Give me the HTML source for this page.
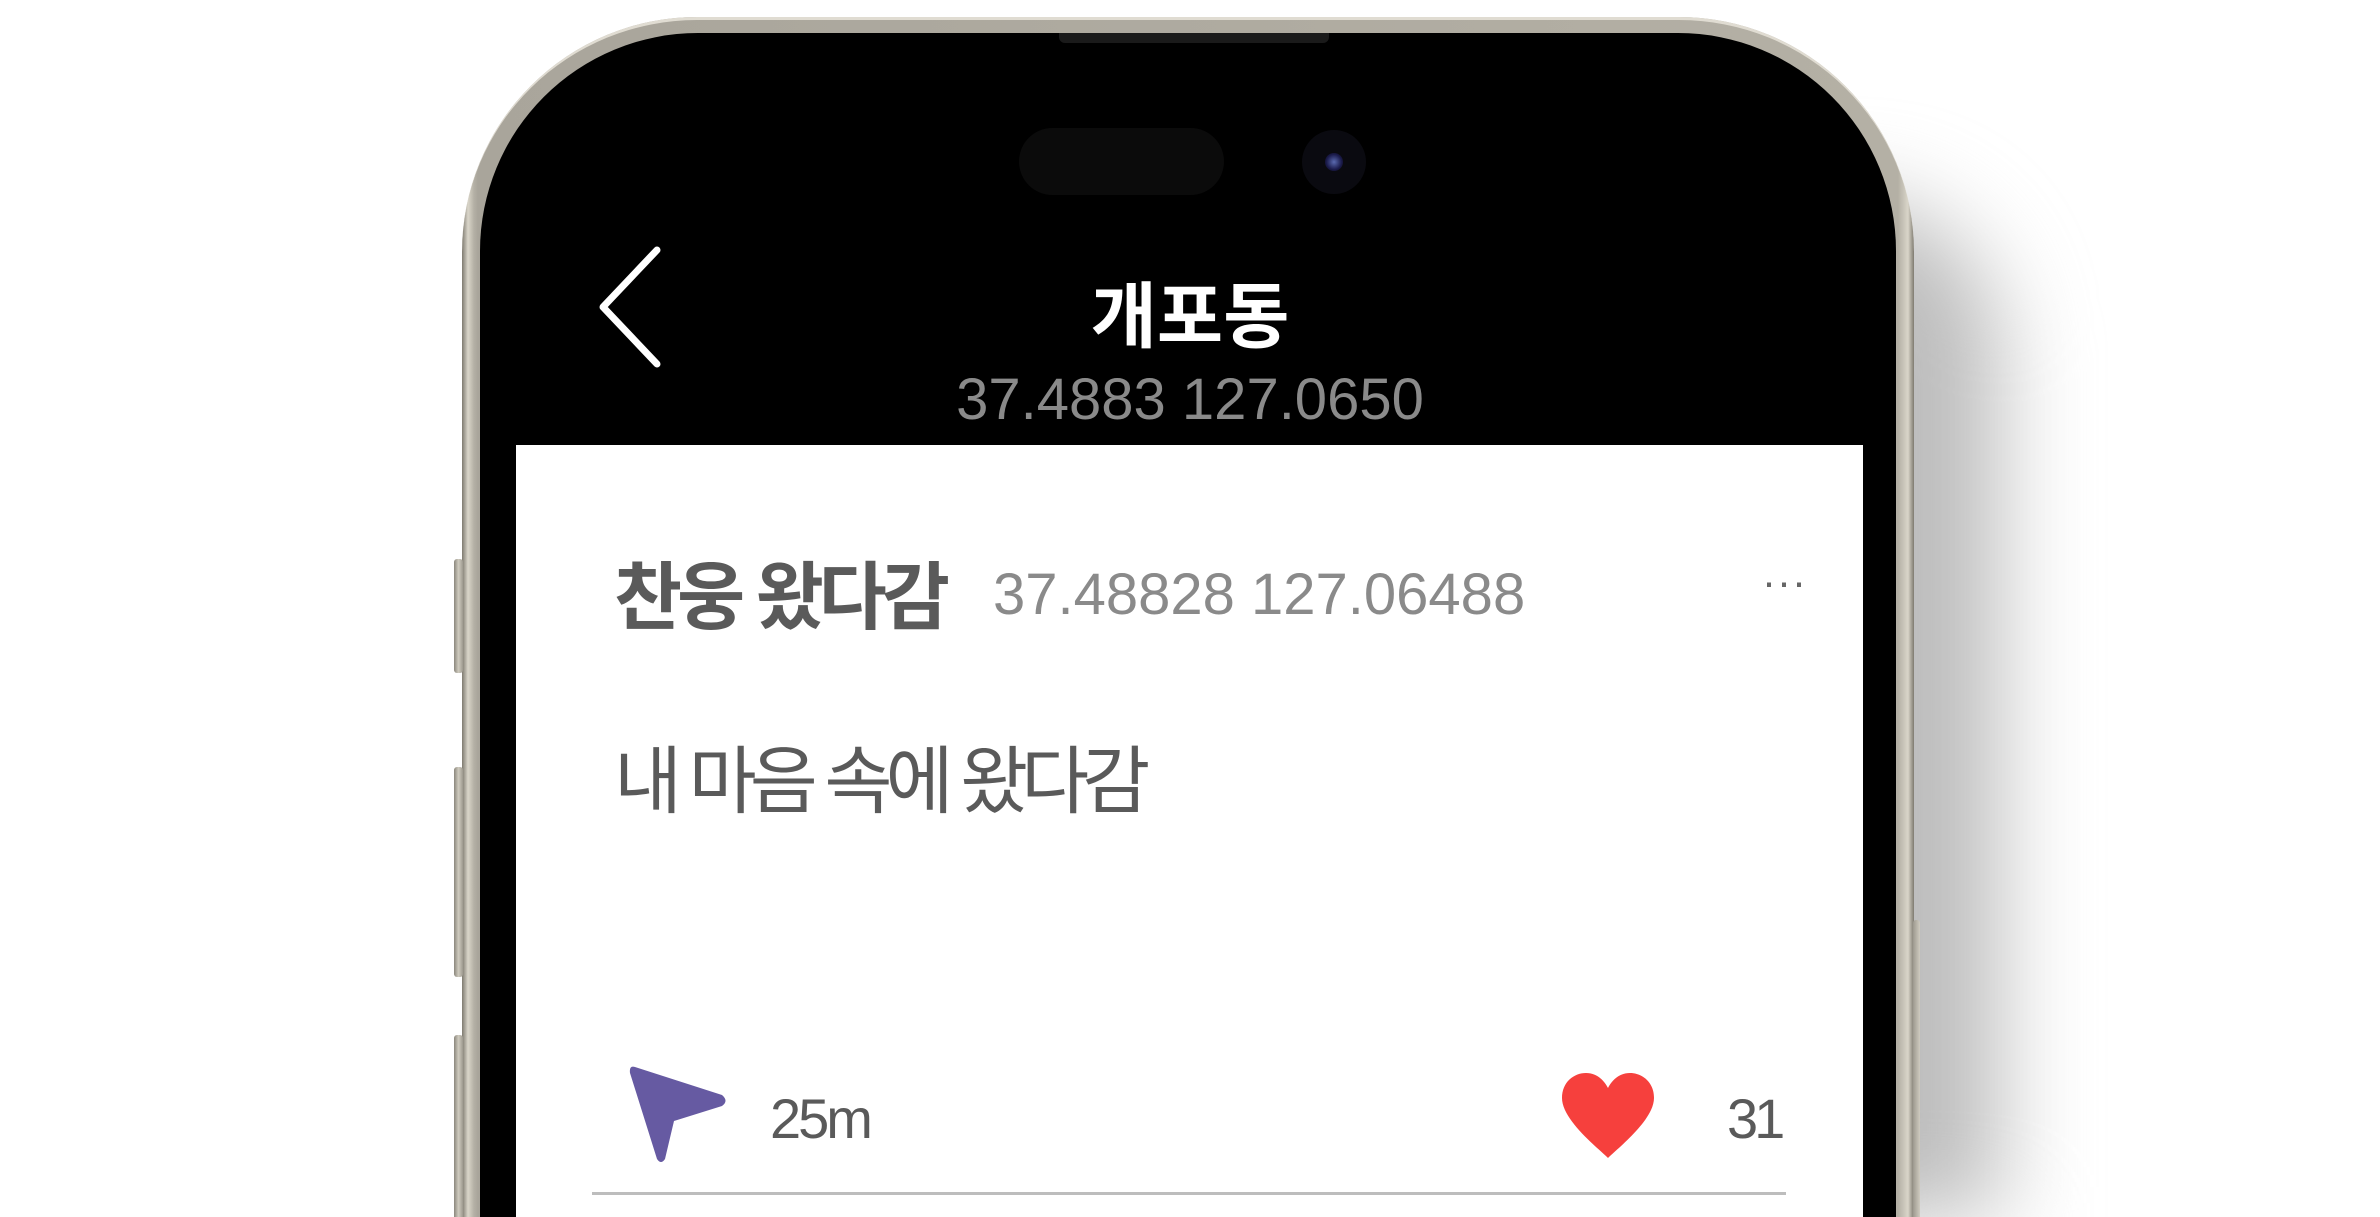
<!DOCTYPE html>
<html><head><meta charset="utf-8"><style>
*{margin:0;padding:0;box-sizing:border-box}
html,body{width:2380px;height:1217px;overflow:hidden;background:#fff}
body{font-family:"Liberation Sans","Noto Sans CJK KR",sans-serif}
#w{position:relative;width:2380px;height:1217px;overflow:hidden}
.shadow{position:absolute;left:1700px;top:200px;width:300px;height:1017px;border-radius:150px 150px 0 0;background:#bdbdbd;filter:blur(45px)}
.frame{position:absolute;left:462px;top:17px;width:1452px;height:1200px;border-radius:235px 235px 0 0;background:linear-gradient(90deg,#7e7a70 0,#d9d5c9 6px,#b4b0a5 12px,#a9a59b 16px,#b4b0a5 1436px,#d9d5c9 1446px,#7e7a70 1452px);}
.frame2{position:absolute;left:462px;top:17px;width:1452px;height:1200px;border-radius:235px 235px 0 0;border-top:3px solid #e0dcd2;}
.screen{position:absolute;left:480px;top:33px;width:1416px;height:1184px;border-radius:218px 218px 0 0;background:#000}
.btn{position:absolute;left:454px;width:9px;background:linear-gradient(90deg,#8a867c,#cfcbbf,#9d998f);border-radius:3px}
.rbtn{position:absolute;left:1913px;width:7px;top:920px;height:297px;background:linear-gradient(90deg,#9d998f,#cfcbbf);border-radius:3px 3px 0 0}
.card{position:absolute;left:516px;top:445px;width:1347px;height:772px;background:#fff}
.t{position:absolute;white-space:nowrap}
</style></head><body><div id="w">
<div class="shadow"></div>
<div class="frame"></div>
<div class="frame2"></div>
<div class="btn" style="top:559px;height:114px"></div>
<div class="btn" style="top:767px;height:210px"></div>
<div class="btn" style="top:1035px;height:182px;border-radius:3px 3px 0 0"></div>
<div class="rbtn"></div>
<div class="screen"></div>
<div style="position:absolute;left:1059px;top:33px;width:270px;height:10px;background:#1a1a1a;border-radius:0 0 6px 6px"></div>
<div style="position:absolute;left:1019px;top:128px;width:205px;height:67px;border-radius:34px;background:#0b0b0b"></div>
<div style="position:absolute;left:1302px;top:130px;width:64px;height:64px;border-radius:50%;background:#0a0a10"></div>
<div style="position:absolute;left:1325px;top:153px;width:18px;height:18px;border-radius:50%;background:radial-gradient(circle,#5a6ab0 0,#1a1a4a 60%,#0a0a10 100%)"></div>
<svg style="position:absolute;left:585px;top:240px" width="90" height="135"><polyline points="72,10 18,67 72,124" fill="none" stroke="#fff" stroke-width="7" stroke-linecap="round" stroke-linejoin="round"/></svg>
<div class="t" style="left:0;width:2380px;text-align:center;top:258px;font-size:72px;font-weight:bold;color:#fff">개포동</div>
<div class="t" style="left:0;width:2380px;text-align:center;top:366px;font-size:58px;color:#8a8a8a">37.4883 127.0650</div>
<div class="card"></div>
<div class="t" style="left:614px;top:538px;font-size:74px;font-weight:bold;color:#5a5a5a;letter-spacing:-5px">찬웅 왔다감</div>
<div class="t" style="left:993px;top:561px;font-size:58px;color:#8a8a8a">37.48828 127.06488</div>
<div class="t" style="left:1762px;top:558px;font-size:42px;color:#666;letter-spacing:1px">···</div>
<div class="t" style="left:614px;top:722px;font-size:74px;color:#5a5a5a;letter-spacing:-7px">내 마음 속에 왔다감</div>
<svg style="position:absolute;left:625px;top:1059px" width="110" height="110"><path d="M10,8 Q4,6 5,14 L32,100 Q36,106 40,100 L49,62 L97,47 Q104,42 97,36 Z" fill="#665aa2"/></svg>
<div class="t" style="left:770px;top:1086px;font-size:56px;color:#5a5a5a;letter-spacing:-3px">25m</div>
<svg style="position:absolute;left:1558px;top:1070px" width="100" height="92"><path d="M50,88 C40,78 4,50 4,28 C4,12 16,3 28,3 C40,3 47,12 50,18 C53,12 60,3 72,3 C84,3 96,12 96,28 C96,50 60,78 50,88 Z" fill="#f6403d"/></svg>
<div class="t" style="left:1727px;top:1086px;font-size:56px;color:#5a5a5a;letter-spacing:-4px">31</div>
<div style="position:absolute;left:592px;top:1192px;width:1194px;height:3px;background:#bdbdbd"></div>
</div></body></html>
